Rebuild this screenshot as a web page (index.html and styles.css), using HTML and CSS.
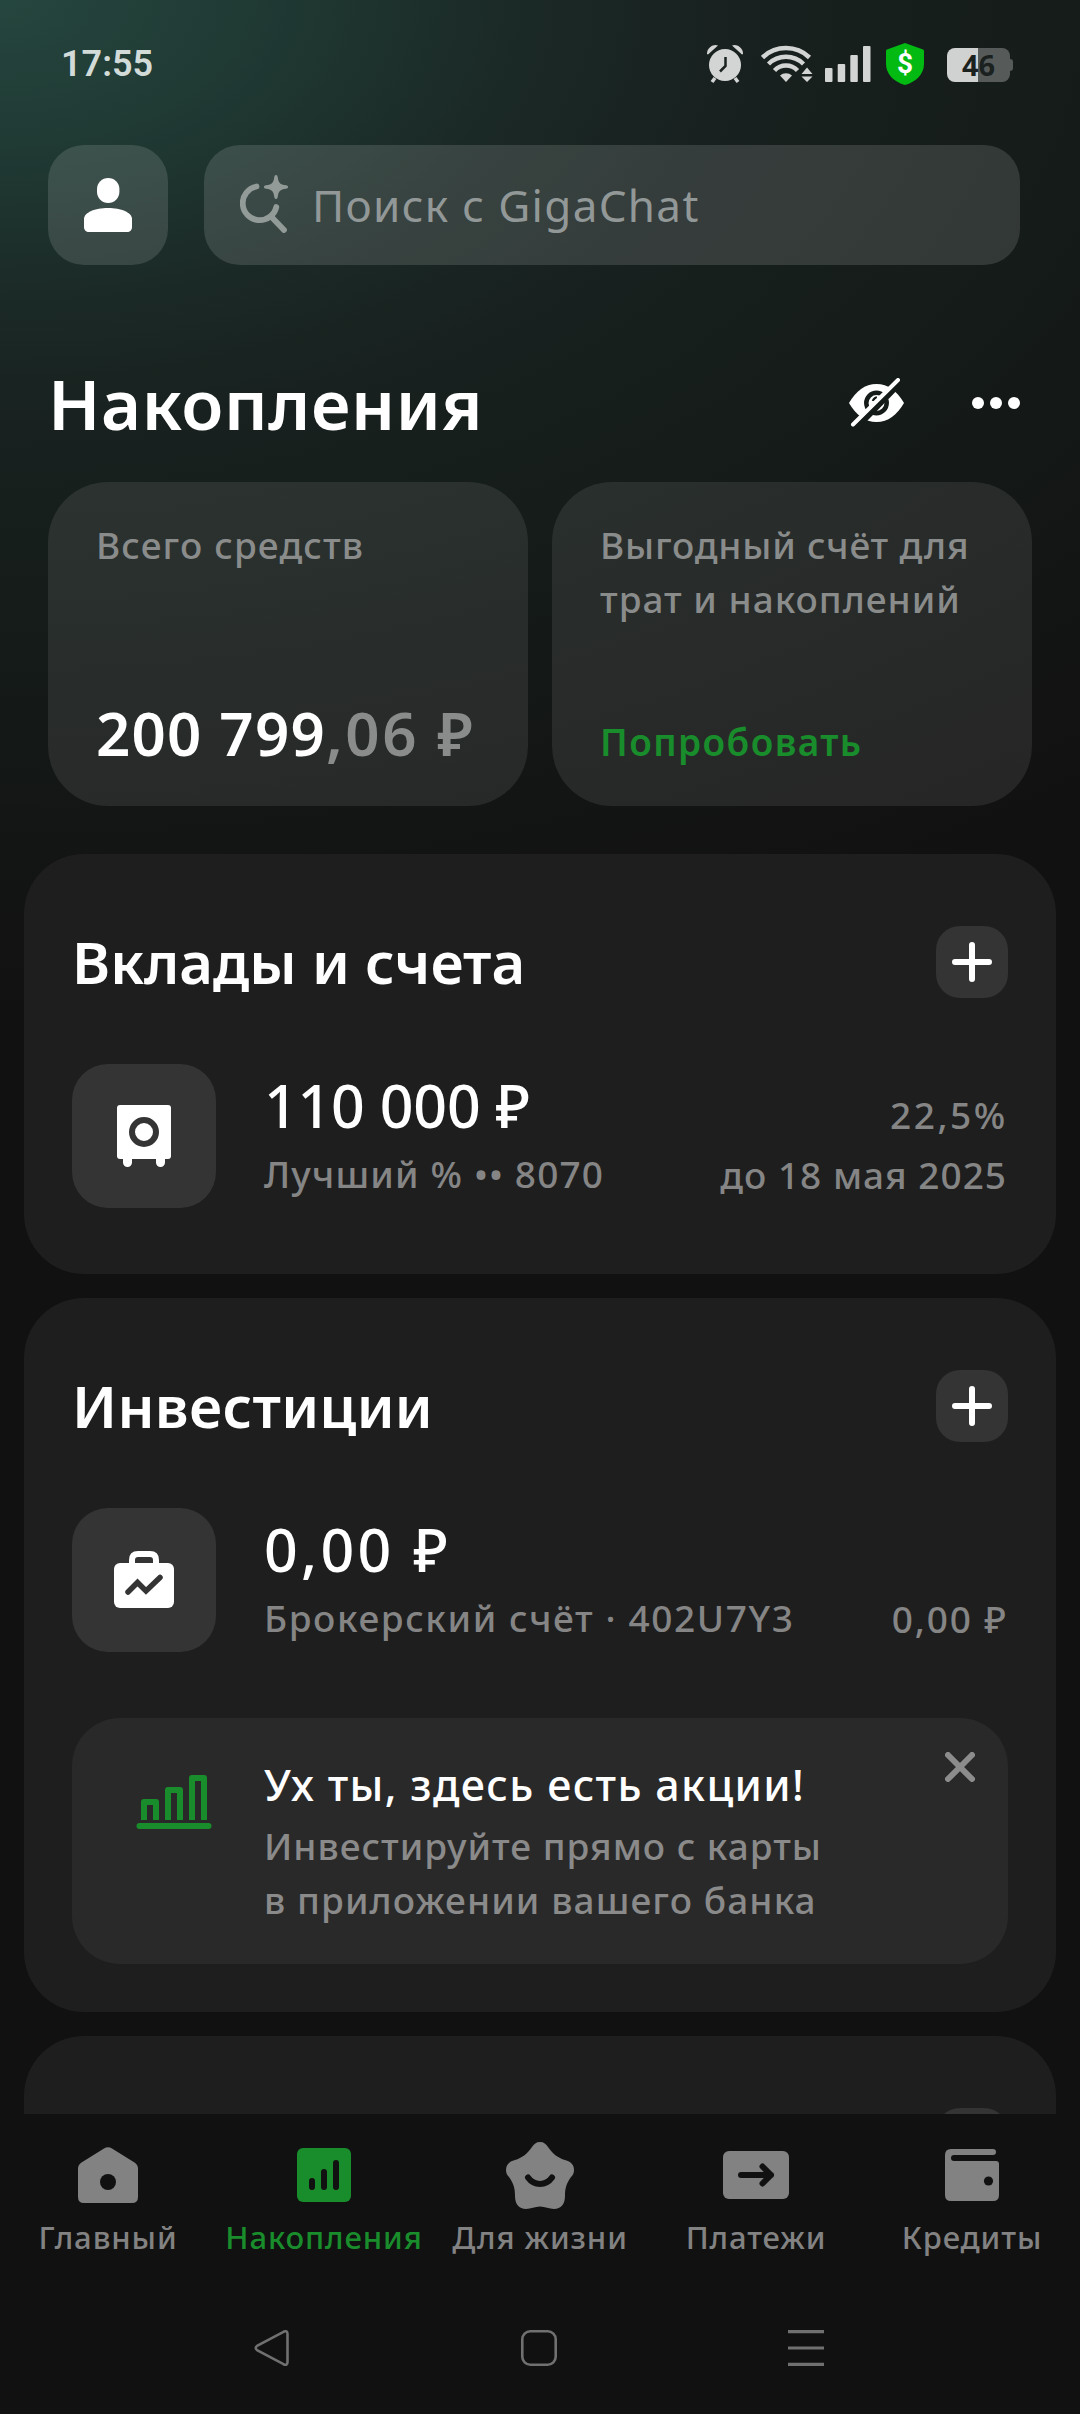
FILE: index.html
```html
<!DOCTYPE html>
<html lang="ru">
  <head>
    <meta charset="UTF-8" />
    <meta name="viewport" content="width=device-width, initial-scale=1.0" />
    <title>Накопления</title>
    <link rel="stylesheet" href="styles.css">
  </head>
  <body>
    <div class="screen">
      <div class="content">
        <div class="status-bar">
          <span class="clock">17:55</span>
          <div class="status-icons">
            <svg class="alarm" width="38" height="40" viewBox="0 0 38 40">
              <g fill="#d3d5d4">
                <path d="M1 10a8.500 8.500 0 0 1 11-8.500L2 10.500z" />
                <path d="M37 10a8.500 8.500 0 0 0-11-8.500l10 9z" />
                <circle cx="19" cy="21" r="16" />
              </g>
              <path d="M9 34l-3 4M29 34l3 4" stroke="#d3d5d4" stroke-width="3.500" />
              <path d="M19.500 13v9l-5.500 5.500" fill="none" stroke="#1a2220" stroke-width="2.500" />
            </svg>
            <svg class="wifi" width="52" height="38" viewBox="0 0 52 38">
              <g fill="none" stroke="#d3d5d4" stroke-width="4.500">
                <path d="M1.500 12.500a34 34 0 0 1 47 0" />
                <path d="M7.500 19a25 25 0 0 1 35 0" />
                <path d="M13.500 25.500a16 16 0 0 1 23 0" />
              </g>
              <path d="M25 37l-6-6.500a9 9 0 0 1 12 0z" fill="#d3d5d4" />
              <path d="M40.500 29l5.500-6.500 5.500 6.500zM40.500 31.500l5.500 5.500 5.500-5.500z" fill="#d3d5d4" />
            </svg>
            <svg class="signal" width="46" height="36" viewBox="0 0 46 36" fill="#d3d5d4">
              <rect x="0" y="22" width="7.500" height="14" rx="1" />
              <rect x="12.700" y="18" width="7.500" height="18" rx="1" />
              <rect x="25.300" y="9" width="7.500" height="27" rx="1" />
              <rect x="38" y="0" width="7.500" height="36" rx="1" />
            </svg>
            <div class="shield">
              <svg width="38" height="42" viewBox="0 0 38 42">
                <path d="M19 0l18 6.500q1 .4 1 1.500v13c0 10-8 18-19 21C8 39 0 31 0 21V8q0-1.100 1-1.500z" fill="#02ba12" />
              </svg>
              <span class="shield-sign">$</span>
            </div>
            <div class="battery"><span>46</span></div>
          </div>
        </div>

        <div class="header">
          <div class="avatar">
            <svg width="48" height="56" viewBox="0 0 48 56" fill="#fff">
              <rect x="13" y="1" width="22.400" height="25" rx="11.200" />
              <path d="M0 42c0-6.500 11-11 24-11s24 4.500 24 11v8c0 3-2 5-5 5H5c-3 0-5-2-5-5z" />
            </svg>
          </div>
          <div class="search">
            <svg width="48" height="58" viewBox="0 0 48 58">
              <g fill="none" stroke="#929b98" stroke-width="5.800" stroke-linecap="round">
                <path d="M16.500 11.500A17 17 0 1 0 36.300 32" />
                <path d="M32 42.500l12 12.500" />
              </g>
              <path d="M36 0c1 0 1.500.8 1.700 2C38.500 8 40 9.500 46 10.300c1.200.2 2 .7 2 1.700s-.8 1.500-2 1.700C40 14.500 38.500 16 37.700 22c-.2 1.200-.7 2-1.700 2s-1.500-.8-1.700-2C33.500 16 32 14.500 26 13.700c-1.200-.2-2-.7-2-1.700s.8-1.500 2-1.700C32 9.500 33.500 8 34.300 2c.2-1.200.7-2 1.700-2z" fill="#929b98" />
            </svg>
            <span class="search-text">Поиск с GigaChat</span>
          </div>
        </div>

        <div class="title-row">
          <h1 class="page-title">Накопления</h1>
          <svg class="eye" width="56" height="50" viewBox="0 0 56 50">
            <mask id="eyeMask">
              <rect width="56" height="50" fill="#fff" />
              <circle cx="27.500" cy="25" r="10.200" fill="none" stroke="#000" stroke-width="4.500" />
              <path d="M24 23a5 5 0 0 1 4-3.500" fill="none" stroke="#000" stroke-width="2.500" />
              <path d="M53 3L8 49" stroke="#000" stroke-width="6" />
            </mask>
            <path d="M0 25C7 13 16 6 27.500 6S48 13 55 25C48 37 39 44 27.500 44S7 37 0 25z" fill="#fff" mask="url(#eyeMask)" />
            <path d="M49 2L4 46.500" stroke="#fff" stroke-width="4" stroke-linecap="round" />
          </svg>
          <svg class="dots" width="48" height="12" viewBox="0 0 48 12" fill="#fff">
            <circle cx="6" cy="6" r="6" />
            <circle cx="24" cy="6" r="6" />
            <circle cx="42" cy="6" r="6" />
          </svg>
        </div>

        <div class="cards">
          <div class="card">
            <p class="card-text card-label">Всего средств</p>
            <p class="total">200 799<span class="total-cents">,06 ₽</span></p>
          </div>
          <div class="card">
            <p class="card-text">Выгодный счёт для<br><span class="card-line">трат и накоплений</span></p>
            <p class="card-link">Попробовать</p>
          </div>
        </div>

        <div class="section">
          <div class="section-head">
            <h2 class="section-title">Вклады и счета</h2>
            <button class="plus-btn">
              <svg width="40" height="40" viewBox="0 0 40 40" stroke="#fff" stroke-width="6" stroke-linecap="round">
                <path d="M20 3v34M3 20h34" />
              </svg>
            </button>
          </div>
          <div class="row">
            <div class="tile">
              <svg width="54" height="62" viewBox="0 0 54 62">
                <path d="M6 50h9v7.500a4.500 4.500 0 0 1-9 0zM39 50h9v7.500a4.500 4.500 0 0 1-9 0z" fill="#fff" />
                <rect width="54" height="54" rx="3" fill="#fff" />
                <circle cx="27" cy="27" r="12" fill="none" stroke="#343434" stroke-width="6" />
              </svg>
            </div>
            <div class="row-main">
              <p class="amount amount-deposit">110 000 ₽</p>
              <p class="sub sub-deposit">Лучший % •• 8070</p>
            </div>
            <div class="row-side">
              <p class="rate">22,5%</p>
              <p class="until">до 18 мая 2025</p>
            </div>
          </div>
        </div>

        <div class="section section-invest">
          <div class="section-head">
            <h2 class="section-title title-invest">Инвестиции</h2>
            <button class="plus-btn">
              <svg width="40" height="40" viewBox="0 0 40 40" stroke="#fff" stroke-width="6" stroke-linecap="round">
                <path d="M20 3v34M3 20h34" />
              </svg>
            </button>
          </div>
          <div class="row">
            <div class="tile">
              <svg width="60" height="58" viewBox="0 0 60 58">
                <path d="M18 14V9q0-6 6-6h12q6 0 6 6v5" fill="none" stroke="#fff" stroke-width="6" />
                <rect y="12" width="60" height="45" rx="6" fill="#fff" />
                <path d="M14 41l9.500-9.500 8.500 8.500 14-13.500" fill="none" stroke="#343434" stroke-width="5.500" stroke-linecap="round" />
              </svg>
            </div>
            <div class="row-main">
              <p class="amount amount-broker">0,00 ₽</p>
              <p class="sub sub-broker">Брокерский счёт · 402U7Y3</p>
            </div>
            <div class="row-side">
              <p class="change">0,00 ₽</p>
            </div>
          </div>
          <div class="promo">
            <div class="promo-icon">
              <svg width="76" height="54" viewBox="0 0 76 54" fill="none" stroke="#198c2c" stroke-width="6" stroke-linejoin="round">
                <path d="M8 45V27h12v18M32 45V15h12v30M56 45V3h12v42" />
                <path d="M3.500 51h69" stroke-linecap="round" />
              </svg>
            </div>
            <div class="promo-body">
              <p class="promo-title">Ух ты, здесь есть акции!</p>
              <p class="promo-text">Инвестируйте прямо с карты<br><span class="promo-line">в приложении вашего банка</span></p>
            </div>
            <svg class="promo-close" width="30" height="30" viewBox="0 0 30 30" stroke="#8c8c8c" stroke-width="6" stroke-linecap="round">
              <path d="M3 3l24 24M27 3L3 27" />
            </svg>
          </div>
        </div>

        <div class="section">
          <div class="section-head section-head-empty">
            <button class="plus-btn"></button>
          </div>
        </div>
      </div>

      <div class="tab-bar">
        <div class="tab">
          <div class="tab-icon">
            <svg width="60" height="56" viewBox="0 0 60 56">
              <path d="M26 1.500q4-2.500 8 0l22.500 14Q60 18 60 21.500V50q0 6-6 6H6q-6 0-6-6V21.500Q0 18 3.500 15.500z" fill="#828282" />
              <circle cx="30" cy="35" r="8" fill="#111" />
            </svg>
          </div>
          <span class="tab-label">Главный</span>
        </div>
        <div class="tab active">
          <div class="tab-icon">
            <svg width="54" height="54" viewBox="0 0 54 54">
              <rect width="54" height="54" rx="6" fill="#198c2c" />
              <path d="M15 33v6M27 24v15M39 15v24" stroke="#111" stroke-width="6" stroke-linecap="round" />
            </svg>
          </div>
          <span class="tab-label">Накопления</span>
        </div>
        <div class="tab">
          <div class="tab-icon">
            <svg width="68" height="67" viewBox="0 0 68 67">
              <path d="M34 0c4 0 6 2 8 5 5 7 10 11 17 13 6 1.500 9 5 9 10 0 3-1 5-3 7-5 7-6 12-6 19 0 8-4 13-11 13-5 0-9-2.500-14-2.500S25 67 20 67c-7 0-11-5-11-13 0-7-1-12-6-19-2-2-3-4-3-7 0-5 3-8.500 9-10 7-2 12-6 17-13 2-3 4-5 8-5z" fill="#828282" />
              <path d="M22 35.500c6 8.500 18 8.500 24 0" fill="none" stroke="#111" stroke-width="6" stroke-linecap="round" />
            </svg>
          </div>
          <span class="tab-label">Для жизни</span>
        </div>
        <div class="tab">
          <div class="tab-icon">
            <svg width="66" height="48" viewBox="0 0 66 48">
              <rect width="66" height="48" rx="6" fill="#828282" />
              <path d="M18 24h30M39.500 15.500l8.500 8.500-8.500 8.500" fill="none" stroke="#111" stroke-width="6" stroke-linecap="round" stroke-linejoin="round" />
            </svg>
          </div>
          <span class="tab-label">Платежи</span>
        </div>
        <div class="tab">
          <div class="tab-icon">
            <svg width="54" height="52" viewBox="0 0 54 52">
              <path d="M6 0h42a3 3 0 0 1 0 6H9a3 3 0 0 0 0 6h42q3 0 3 3v31q0 6-6 6H6q-6 0-6-6V6q0-6 6-6z" fill="#828282" />
              <circle cx="43.500" cy="32" r="4.600" fill="#111" />
            </svg>
          </div>
          <span class="tab-label">Кредиты</span>
        </div>
      </div>

      <div class="system-nav">
        <svg width="36" height="36" viewBox="0 0 36 36" fill="none" stroke="#707070" stroke-width="2.600">
          <path d="M29.500 1.800Q33.500 0 33.500 4v28q0 4-4 2.200L3.500 20.500q-3.500-2.500 0-5z" />
        </svg>
        <svg width="36" height="36" viewBox="0 0 36 36" fill="none" stroke="#707070" stroke-width="2.600">
          <rect x="1.300" y="1.300" width="33.400" height="33.400" rx="8" />
        </svg>
        <svg width="36" height="36" viewBox="0 0 36 36" stroke="#707070" stroke-width="3.200">
          <path d="M0 1.600h36M0 18h36M0 34.400h36" />
        </svg>
      </div>
    </div>
  </body>
</html>
```

FILE: styles.css
```css
* {
  box-sizing: border-box;
}

body {
  margin: 0;
  background-color: #111;
  color: #fff;
  font-family: "Noto Sans", "Open Sans", sans-serif;
}

h1,
h2,
p {
  margin: 0;
  white-space: nowrap;
}

svg {
  display: block;
  flex: none;
}

button {
  border: none;
  padding: 0;
}

.screen {
  width: 1080px;
  height: 2414px;
  display: flex;
  flex-direction: column;
  overflow: hidden;
  background: radial-gradient(1750px 1020px at 0 0, #25463e 0%, #203a34 14%, #1b2926 30%, #18211f 42%, #151c1a 60%, #131614 80%, #111 100%) no-repeat #111;
}

.content {
  height: 2114px;
  flex: none;
  overflow: hidden;
}

/* status bar */
.status-bar {
  height: 128px;
  padding: 0 67px 0 61px;
  display: flex;
  align-items: center;
  justify-content: space-between;
}

.clock {
  font-family: Roboto, sans-serif;
  font-size: 36px;
  font-weight: 600;
  color: #d3dbd9;
}

.status-icons {
  display: flex;
  align-items: center;
}

.wifi {
  margin-left: 17px;
}

.signal {
  margin-left: 12px;
}

.shield {
  position: relative;
  margin-left: 15px;
}

.shield-sign {
  position: absolute;
  inset: 0;
  line-height: 42px;
  text-align: center;
  font-family: Roboto, sans-serif;
  font-size: 28px;
  font-weight: 700;
}

.battery {
  position: relative;
  width: 63px;
  height: 34px;
  margin: 2px 3px 0 23px;
  border-radius: 8px;
  background: linear-gradient(90deg, #d0d2d1 31px, #565b59 31px);
  text-align: center;
  color: #1a211f;
  font-size: 29px;
  font-weight: 700;
  line-height: 34px;
}

.battery::after {
  content: "";
  position: absolute;
  left: 63px;
  top: 11px;
  width: 3px;
  height: 12px;
  border-radius: 0 3px 3px 0;
  background: #565b59;
}

/* header */
.header {
  display: flex;
  gap: 36px;
  margin: 17px 60px 0 48px;
}

.avatar {
  width: 120px;
  height: 120px;
  border-radius: 36px;
  background: rgba(255, 255, 255, 0.13);
  display: flex;
  align-items: center;
  justify-content: center;
}

.search {
  flex: 1;
  height: 120px;
  padding: 0 36px 2px;
  border-radius: 36px;
  background: rgba(255, 255, 255, 0.13);
  display: flex;
  align-items: center;
}

.search-text {
  margin-left: 24px;
  padding-top: 2px;
  font-size: 44px;
  letter-spacing: 1.35px;
  color: #929897;
}

.title-row {
  height: 80px;
  margin: 98px 60px 39px 48px;
  display: flex;
  align-items: center;
}

.page-title {
  font-size: 69px;
  font-weight: 600;
  line-height: 80px;
  letter-spacing: 0.6px;
}

.eye {
  margin-left: auto;
}

.dots {
  margin-left: 67px;
}

/* top cards */
.cards {
  display: grid;
  grid-template-columns: 480px 480px;
  gap: 24px;
  margin-left: 48px;
}

.card {
  height: 324px;
  padding: 36px 48px 37px;
  border-radius: 60px;
  background: rgba(255, 255, 255, 0.085);
  display: flex;
  flex-direction: column;
  justify-content: space-between;
}

.card-text {
  font-size: 37px;
  font-weight: 500;
  line-height: 54px;
  letter-spacing: 0.8px;
  color: #8a8c8b;
}

.card-label {
  letter-spacing: 1.15px;
}

.card-line {
  letter-spacing: 1px;
}

.total {
  font-size: 60px;
  font-weight: 600;
  line-height: 72px;
  letter-spacing: 1.2px;
}

.total-cents {
  letter-spacing: 2.6px;
  color: #8a8c8b;
}

.card-link {
  font-size: 37px;
  font-weight: 600;
  line-height: 54px;
  letter-spacing: 1.4px;
  color: #198c2c;
}

/* sections */
.section {
  margin: 48px 24px 0;
  padding: 72px 48px 66px;
  border-radius: 60px;
  background: #1e1e1e;
}

.section + .section {
  margin-top: 24px;
}

.section-invest {
  padding-bottom: 48px;
}

.section-head {
  display: flex;
  justify-content: space-between;
}

.section-head-empty {
  justify-content: flex-end;
}

.section-title {
  font-size: 58px;
  font-weight: 600;
  line-height: 72px;
}

.title-invest {
  letter-spacing: 0.3px;
}

.plus-btn {
  width: 72px;
  height: 72px;
  border-radius: 24px;
  background: #343434;
  display: flex;
  align-items: center;
  justify-content: center;
}

.row {
  display: flex;
  height: 144px;
  margin-top: 66px;
}

.tile {
  width: 144px;
  height: 144px;
  border-radius: 36px;
  background: #343434;
  display: flex;
  align-items: center;
  justify-content: center;
}

.row-main {
  margin-left: 48px;
  padding-top: 5px;
}

.amount {
  font-size: 59px;
  font-weight: 500;
  line-height: 72px;
}

.amount-deposit {
  letter-spacing: -0.2px;
}

.amount-broker {
  letter-spacing: 3.3px;
}

.sub,
.row-side {
  font-size: 37px;
  font-weight: 500;
  color: #858585;
}

.sub {
  margin-top: 6px;
  line-height: 54px;
}

.sub-deposit {
  letter-spacing: 1.15px;
}

.sub-broker {
  letter-spacing: 1.6px;
}

.row-side {
  margin-left: auto;
  padding-bottom: 3px;
  display: flex;
  flex-direction: column;
  justify-content: flex-end;
  align-items: flex-end;
  line-height: 60px;
}

.rate {
  letter-spacing: 2.6px;
}

.until {
  margin-right: 1px;
  letter-spacing: 1px;
}

.change {
  letter-spacing: 1.9px;
}

.promo {
  display: flex;
  align-items: flex-start;
  height: 246px;
  margin-top: 66px;
  padding: 34px 33px 0 64px;
  border-radius: 48px;
  background: #292929;
}

.promo-icon {
  width: 128px;
  padding-top: 23px;
}

.promo-title {
  padding-top: 3px;
  font-size: 43px;
  font-weight: 500;
  line-height: 60px;
  letter-spacing: 1.35px;
}

.promo-text {
  margin-top: 4px;
  font-size: 37px;
  font-weight: 500;
  line-height: 54px;
  letter-spacing: 1px;
  color: #8a8a8a;
}

.promo-line {
  letter-spacing: 1.1px;
}

.promo-close {
  margin-left: auto;
}

/* bottom navigation */
.tab-bar {
  height: 170px;
  flex: none;
  padding-top: 25px;
  display: grid;
  grid-template-columns: repeat(5, 216px);
  background: #111;
}

.tab {
  display: flex;
  flex-direction: column;
  align-items: center;
  color: #828282;
}

.tab-icon {
  height: 72px;
  display: flex;
  align-items: center;
}

.tab-label {
  margin-top: 6px;
  font-size: 31px;
  font-weight: 500;
  line-height: 40px;
  letter-spacing: 0.9px;
  white-space: nowrap;
}

.active {
  color: #198c2c;
}

.system-nav {
  height: 128px;
  padding: 0 256px 0 254px;
  display: flex;
  align-items: center;
  justify-content: space-between;
}
```
